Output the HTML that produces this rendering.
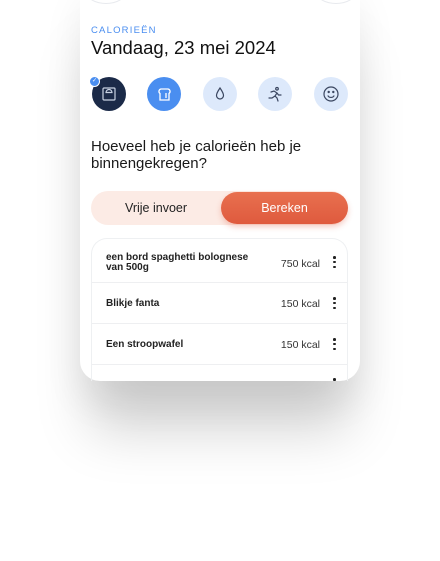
<!DOCTYPE html>
<html><head><meta charset="utf-8"><style>
*{margin:0;padding:0;box-sizing:border-box}
body{width:440px;height:561px;background:#fff;font-family:"Liberation Sans",sans-serif;position:relative;overflow:hidden}
.card{position:absolute;left:80px;top:-20px;width:280px;height:401px;background:#fff;border-radius:20px;box-shadow:0 60px 55px -10px rgba(0,0,0,0.17),0 20px 40px rgba(0,0,0,0.07)}
.topc{position:absolute;top:-20px;width:40px;height:24px;border-radius:50%;border:1px solid #e8eaee}
.lbl{position:absolute;left:91px;top:25px;font-size:9.5px;letter-spacing:1.2px;color:#4a8ef0}
.title{position:absolute;left:91px;top:37px;font-size:18.5px;color:#111}
.ic{position:absolute;top:77px;width:34px;height:34px;border-radius:50%;background:#dde9fb;display:flex;align-items:center;justify-content:center}
.q{position:absolute;left:91px;top:138px;font-size:15px;line-height:17px;color:#1a1a1a;width:240px}
.tog{position:absolute;left:91px;top:191px;width:257px;height:34px;border-radius:17px;background:#fcebe5}
.tog .a{position:absolute;left:0;width:130px;top:0;height:34px;line-height:34px;text-align:center;font-size:12.5px;color:#222}
.tog .b{position:absolute;left:130px;width:127px;top:1px;height:32px;line-height:32px;border-radius:16px;text-align:center;font-size:12.5px;color:#fff;background:linear-gradient(#e8704f,#df5a3e);box-shadow:0 3px 6px rgba(223,90,62,0.3)}
.list{position:absolute;left:91px;top:238px;width:257px;height:143px;border:1px solid #eef0f2;border-bottom:none;border-radius:16px 16px 0 0;overflow:hidden}
.row{position:absolute;left:0;width:257px;border-bottom:1px solid #eeeff1;font-size:10px;color:#1c1c1c}
.row .n{position:absolute;left:14px;font-weight:bold;line-height:10px;color:#222}
.row .k{position:absolute;right:29px;color:#333;font-size:10.5px}
.row .d{position:absolute;right:13px;width:3px}
.d i{display:block;width:2.6px;height:2.6px;border-radius:50%;background:#222;margin-bottom:2.2px}
</style></head><body>
<div class="card"></div>
<div class="topc" style="left:86px"></div>
<div class="topc" style="left:316px"></div>
<div class="lbl">CALORIEËN</div>
<div class="title">Vandaag, 23 mei 2024</div>
<div class="ic" style="left:92px;background:#1b2a48">
<svg width="16" height="16" viewBox="0 0 16 16" fill="none" stroke="#c9d3e3" stroke-width="1.2"><rect x="2" y="2" width="12" height="12" rx="1"/><path d="M5 6.5a3 3 0 0 1 6 0z"/></svg></div>
<div style="position:absolute;left:89px;top:76px;width:11px;height:11px;border-radius:50%;background:#4a8ef0;border:1.5px solid #fff;color:#fff;font-size:6px;line-height:8px;text-align:center">✓</div>
<div class="ic" style="left:147px;background:#4a8ef0">
<svg width="16" height="16" viewBox="0 0 16 16" fill="none" stroke="#fff" stroke-width="1.3"><path d="M4 14V7.5A2.5 2.5 0 0 1 5 3h7a2.5 2.5 0 0 1 1 4.5V14z"/><path d="M10 7v5"/></svg></div>
<div class="ic" style="left:203px">
<svg width="16" height="16" viewBox="0 0 16 16" fill="none" stroke="#3a4660" stroke-width="1.2"><path d="M8 2C6 5 4.5 7 4.5 9.5a3.5 3.5 0 0 0 7 0C11.5 7 10 5 8 2z"/></svg></div>
<div class="ic" style="left:258px">
<svg width="16" height="16" viewBox="0 0 16 16" fill="none" stroke="#3a4660" stroke-width="1.2" stroke-linecap="round"><circle cx="10" cy="2.8" r="1.3"/><path d="M4 6l3-1 3 2-2 3 2 2 1 3M8 10l-3 2H2M10 7l1.5 2H14"/></svg></div>
<div class="ic" style="left:314px">
<svg width="18" height="18" viewBox="0 0 18 18" fill="none" stroke="#3a4660" stroke-width="1.2"><circle cx="9" cy="9" r="7"/><path d="M5.8 10.5a3.6 3.6 0 0 0 6.4 0"/><circle cx="6.7" cy="7" r=".6" fill="#3a4660"/><circle cx="11.3" cy="7" r=".6" fill="#3a4660"/></svg></div>
<div class="q">Hoeveel heb je calorieën heb je binnengekregen?</div>
<div class="tog"><div class="a">Vrije invoer</div><div class="b">Bereken</div></div>
<div class="list">
<div class="row" style="top:0;height:44px"><div class="n" style="top:14px">een bord spaghetti bolognese<br>van 500g</div><div class="k" style="top:19px">750 kcal</div><div class="d" style="top:17px"><i></i><i></i><i></i></div></div>
<div class="row" style="top:44px;height:41px"><div class="n" style="top:16px">Blikje fanta</div><div class="k" style="top:15px">150 kcal</div><div class="d" style="top:14px"><i></i><i></i><i></i></div></div>
<div class="row" style="top:85px;height:41px"><div class="n" style="top:16px">Een stroopwafel</div><div class="k" style="top:15px">150 kcal</div><div class="d" style="top:14px"><i></i><i></i><i></i></div></div>
<div class="row" style="top:126px;height:41px;border:none"><div class="d" style="top:13px"><i></i><i></i><i></i></div></div>
</div>
</body></html>
